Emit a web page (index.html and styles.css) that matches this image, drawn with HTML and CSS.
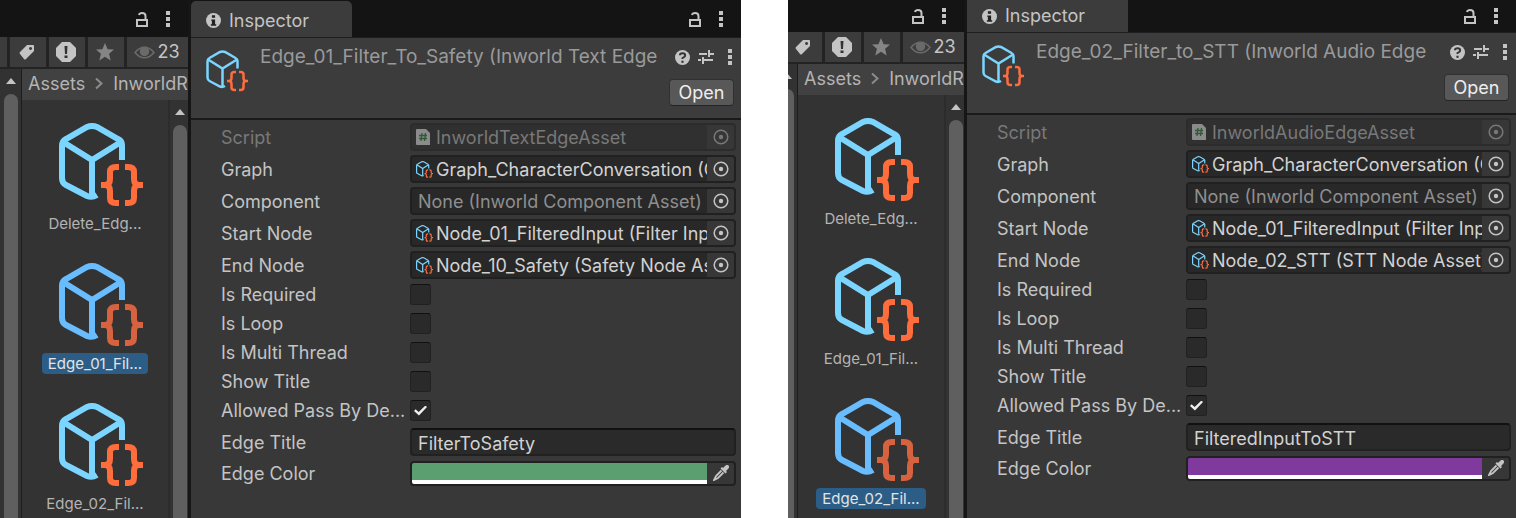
FILE: index.html
```
<!DOCTYPE html>
<html lang="en">
<head>
    <meta charset="UTF-8">
    <meta name="viewport" content="width=device-width, initial-scale=1.0">
    <title>Inspector</title>
    <link rel="stylesheet" href="styles.css">
</head>
<body>
    <!-- shared icons -->
    <svg class="sprite" aria-hidden="true">
        <symbol id="asset" viewBox="0 0 84 84">
            <g class="cube">
                <path d="M63 37V22Q63 18 59 16L38 4Q33 2 28 4L7 16Q3 18 3 23V55Q3 60 7 62L28 73Q33 75 38 72"/>
                <path d="M4 19L33 37L62 19M33 37V72"/>
            </g>
            <g class="braces">
                <path d="M60 44H57Q51 44 51 49V56Q51 62 46 62H42M46 62Q51 62 51 68V75Q51 80 57 80H60"/>
                <path d="M66 44H69Q75 44 75 49V56Q75 62 80 62H84M80 62Q75 62 75 68V75Q75 80 69 80H66"/>
            </g>
        </symbol>
        <symbol id="lock" viewBox="0 0 14 16">
            <path d="M2 9H12V15H2ZM10.500 9V5Q10.500 2 7 2Q4.500 2 4 4" fill="none" stroke="currentColor" stroke-width="2"/>
        </symbol>
        <symbol id="dots" viewBox="0 0 4 16">
            <path d="M0 0h4v4H0zM0 6h4v4H0zM0 12h4v4H0z" fill="currentColor"/>
        </symbol>
        <symbol id="tag" viewBox="0 0 16 16">
            <path fill-rule="evenodd" fill="currentColor" d="M8 1L14 1Q15 1 15 2V7L7 15Q6 16 5 15L1 10Q0 9 1 8ZM11.500 3a1.500 1.500 0 1 0 .1 0z"/>
        </symbol>
        <symbol id="alert" viewBox="0 0 20 20">
            <path d="M6 0h8l6 6v8l-6 6H6l-6-6V6z" fill="currentColor"/>
            <path d="M8.500 4h3l-.5 8h-2zM8.500 13.500h3v2.500h-3z" fill="#333"/>
        </symbol>
        <symbol id="star" viewBox="0 0 18 18">
            <path d="M9 0l2.600 6.200 6.400.4-4.900 4.200L14.700 17.500 9 13.800 3.300 17.500l1.600-6.700L0 6.600l6.400-.4z" fill="currentColor"/>
        </symbol>
        <symbol id="eye" viewBox="0 0 20 12">
            <path d="M1 6Q5 1 10 1T19 6Q15 11 10 11T1 6Z" fill="none" stroke="currentColor" stroke-width="1.500"/>
            <circle cx="10" cy="5" r="4.500" fill="currentColor"/>
        </symbol>
        <symbol id="arrow" viewBox="0 0 10 6">
            <path d="M0 6L5 0L10 6Z" fill="currentColor"/>
        </symbol>
        <symbol id="chevron" viewBox="0 0 8 12">
            <path d="M1 1L6.500 6L1 11" fill="none" stroke="currentColor" stroke-width="2"/>
        </symbol>
        <symbol id="info" viewBox="0 0 14 14">
            <circle cx="7" cy="7" r="7" fill="currentColor"/>
            <path d="M5.500 2h3v2.500h-3zM5 6h3.500v4.500h1V12H4.500v-1.500h1v-3H5z" fill="#222"/>
        </symbol>
        <symbol id="help" viewBox="0 0 14 14">
            <circle cx="7" cy="7" r="7" fill="currentColor"/>
            <path d="M4.500 5Q4.500 3 7 3T9.500 5Q9.500 6.500 7 7.500V8.500" fill="none" stroke="#333" stroke-width="1.800"/>
            <path d="M6 10h2v2H6z" fill="#333"/>
        </symbol>
        <symbol id="preset" viewBox="0 0 16 14">
            <path d="M1 4H9M11 4H16M11 0V7M0 10H3M5 10H15M5 7V14" fill="none" stroke="currentColor" stroke-width="2"/>
        </symbol>
        <symbol id="script" viewBox="0 0 14 16">
            <path d="M1 0H10L14 4V16H1Q0 16 0 15V1Q0 0 1 0Z" fill="#8b8b8b"/>
            <path d="M6 4L5 12M9.500 4L8.500 12M3 6.500H11M3 9.500H11" fill="none" stroke="#2f5a38" stroke-width="1.300"/>
        </symbol>
        <symbol id="target" viewBox="0 0 16 16">
            <circle cx="8" cy="8" r="6.800" fill="none" stroke="currentColor" stroke-width="1.500"/>
            <circle cx="8" cy="8" r="2.200" fill="currentColor"/>
        </symbol>
        <symbol id="dropper" viewBox="0 0 16 16">
            <path d="M10 3L12 1Q14 -1 15.500 .5T15 4L13 6L14 7L12.500 8.500L7.500 3.500L9 2Z" fill="currentColor"/>
            <path d="M8.500 5.500L3 11L1 15L5 13L10.500 7.500" fill="none" stroke="currentColor" stroke-width="1.800"/>
        </symbol>
    </svg>

    <main class="page">
        <section class="window">
            <div class="project">
                <div class="tabbar tools">
                    <button class="icon-btn" aria-label="Lock"><svg class="lock"><use href="#lock"/></svg></button>
                    <button class="icon-btn" aria-label="Menu"><svg class="dots"><use href="#dots"/></svg></button>
                </div>
                <div class="toolbar">
                    <button class="tool" aria-label="Search"></button>
                    <button class="tool" aria-label="Labels"><svg class="tag"><use href="#tag"/></svg></button>
                    <button class="tool" aria-label="Import log"><svg class="alert"><use href="#alert"/></svg></button>
                    <button class="tool dim" aria-label="Favorites"><svg class="star"><use href="#star"/></svg></button>
                    <button class="tool count"><svg class="eye"><use href="#eye"/></svg>23</button>
                </div>
                <div class="browser">
                    <div class="scrollbar tree-scroll"><svg class="arrow"><use href="#arrow"/></svg><div class="thumb"></div></div>
                    <div class="folder">
                        <nav class="crumbs"><a href="#">Assets</a><svg class="chevron"><use href="#chevron"/></svg><a href="#">InworldR</a></nav>
                        <div class="grid-area">
                            <ul class="assets">
                                <li class="asset"><svg><use href="#asset"/></svg><span>Delete_Edg...</span></li>
                                <li class="asset selected"><svg><use href="#asset"/></svg><span>Edge_01_Fil...</span></li>
                                <li class="asset"><svg><use href="#asset"/></svg><span>Edge_02_Fil...</span></li>
                            </ul>
                            <div class="scrollbar"><svg class="arrow"><use href="#arrow"/></svg><div class="thumb"></div></div>
                        </div>
                    </div>
                </div>
            </div>
            <div class="inspector">
                <div class="tabbar">
                    <div class="tab"><svg class="info"><use href="#info"/></svg>Inspector</div>
                    <div class="tools">
                        <button class="icon-btn" aria-label="Lock"><svg class="lock"><use href="#lock"/></svg></button>
                        <button class="icon-btn" aria-label="Menu"><svg class="dots"><use href="#dots"/></svg></button>
                    </div>
                </div>
                <header class="header">
                    <svg class="header-icon"><use href="#asset"/></svg>
                    <div class="header-main">
                        <div class="title-row">
                            <h2 class="title">Edge_01_Filter_To_Safety (Inworld Text Edge</h2>
                            <button class="icon-btn" aria-label="Help"><svg class="help"><use href="#help"/></svg></button>
                            <button class="icon-btn" aria-label="Presets"><svg class="preset"><use href="#preset"/></svg></button>
                            <button class="icon-btn" aria-label="More"><svg class="dots"><use href="#dots"/></svg></button>
                        </div>
                        <button class="open">Open</button>
                    </div>
                </header>
                <form class="fields">
                    <div class="row disabled">
                        <label for="a-script">Script</label>
                        <div class="object"><svg class="script"><use href="#script"/></svg><input id="a-script" value="InworldTextEdgeAsset" disabled><button type="button" class="pick" aria-label="Pick script" disabled><svg><use href="#target"/></svg></button></div>
                    </div>
                    <div class="row">
                        <label for="a-graph">Graph</label>
                        <div class="object"><svg class="mini"><use href="#asset"/></svg><input id="a-graph" value="Graph_CharacterConversation (Graph Asset)" readonly><button type="button" class="pick" aria-label="Pick graph"><svg><use href="#target"/></svg></button></div>
                    </div>
                    <div class="row">
                        <label for="a-component">Component</label>
                        <div class="object none"><input id="a-component" value="None (Inworld Component Asset)" readonly><button type="button" class="pick" aria-label="Pick component"><svg><use href="#target"/></svg></button></div>
                    </div>
                    <div class="row">
                        <label for="a-start">Start Node</label>
                        <div class="object"><svg class="mini"><use href="#asset"/></svg><input id="a-start" value="Node_01_FilteredInput (Filter Input Node Asset)" readonly><button type="button" class="pick" aria-label="Pick start node"><svg><use href="#target"/></svg></button></div>
                    </div>
                    <div class="row">
                        <label for="a-end">End Node</label>
                        <div class="object"><svg class="mini"><use href="#asset"/></svg><input id="a-end" value="Node_10_Safety (Safety Node Asset)" readonly><button type="button" class="pick" aria-label="Pick end node"><svg><use href="#target"/></svg></button></div>
                    </div>
                    <div class="row check"><label for="a-required">Is Required</label><input type="checkbox" id="a-required"></div>
                    <div class="row check"><label for="a-loop">Is Loop</label><input type="checkbox" id="a-loop"></div>
                    <div class="row check"><label for="a-multi">Is Multi Thread</label><input type="checkbox" id="a-multi"></div>
                    <div class="row check"><label for="a-show">Show Title</label><input type="checkbox" id="a-show"></div>
                    <div class="row check"><label for="a-allowed">Allowed Pass By De...</label><input type="checkbox" id="a-allowed" checked></div>
                    <div class="row">
                        <label for="a-title">Edge Title</label>
                        <input type="text" class="text" id="a-title" value="FilterToSafety">
                    </div>
                    <div class="row">
                        <label for="a-color">Edge Color</label>
                        <div class="color"><input type="color" id="a-color" value="#5b9f70"><button type="button" class="pick" aria-label="Pick color"><svg><use href="#dropper"/></svg></button></div>
                    </div>
                </form>
            </div>
        </section>

        <section class="window cropped">
            <div class="project">
                <div class="tabbar tools">
                    <button class="icon-btn" aria-label="Lock"><svg class="lock"><use href="#lock"/></svg></button>
                    <button class="icon-btn" aria-label="Menu"><svg class="dots"><use href="#dots"/></svg></button>
                </div>
                <div class="toolbar">
                    <button class="tool" aria-label="Search"></button>
                    <button class="tool" aria-label="Labels"><svg class="tag"><use href="#tag"/></svg></button>
                    <button class="tool" aria-label="Import log"><svg class="alert"><use href="#alert"/></svg></button>
                    <button class="tool dim" aria-label="Favorites"><svg class="star"><use href="#star"/></svg></button>
                    <button class="tool count"><svg class="eye"><use href="#eye"/></svg>23</button>
                </div>
                <div class="browser">
                    <div class="scrollbar tree-scroll"><svg class="arrow"><use href="#arrow"/></svg><div class="thumb"></div></div>
                    <div class="folder">
                        <nav class="crumbs"><a href="#">Assets</a><svg class="chevron"><use href="#chevron"/></svg><a href="#">InworldR</a></nav>
                        <div class="grid-area">
                            <ul class="assets">
                                <li class="asset"><svg><use href="#asset"/></svg><span>Delete_Edg...</span></li>
                                <li class="asset"><svg><use href="#asset"/></svg><span>Edge_01_Fil...</span></li>
                                <li class="asset selected"><svg><use href="#asset"/></svg><span>Edge_02_Fil...</span></li>
                            </ul>
                            <div class="scrollbar"><svg class="arrow"><use href="#arrow"/></svg><div class="thumb"></div></div>
                        </div>
                    </div>
                </div>
            </div>
            <div class="inspector">
                <div class="tabbar">
                    <div class="tab"><svg class="info"><use href="#info"/></svg>Inspector</div>
                    <div class="tools">
                        <button class="icon-btn" aria-label="Lock"><svg class="lock"><use href="#lock"/></svg></button>
                        <button class="icon-btn" aria-label="Menu"><svg class="dots"><use href="#dots"/></svg></button>
                    </div>
                </div>
                <header class="header">
                    <svg class="header-icon"><use href="#asset"/></svg>
                    <div class="header-main">
                        <div class="title-row">
                            <h2 class="title">Edge_02_Filter_to_STT (Inworld Audio Edge</h2>
                            <button class="icon-btn" aria-label="Help"><svg class="help"><use href="#help"/></svg></button>
                            <button class="icon-btn" aria-label="Presets"><svg class="preset"><use href="#preset"/></svg></button>
                            <button class="icon-btn" aria-label="More"><svg class="dots"><use href="#dots"/></svg></button>
                        </div>
                        <button class="open">Open</button>
                    </div>
                </header>
                <form class="fields">
                    <div class="row disabled">
                        <label for="b-script">Script</label>
                        <div class="object"><svg class="script"><use href="#script"/></svg><input id="b-script" value="InworldAudioEdgeAsset" disabled><button type="button" class="pick" aria-label="Pick script" disabled><svg><use href="#target"/></svg></button></div>
                    </div>
                    <div class="row">
                        <label for="b-graph">Graph</label>
                        <div class="object"><svg class="mini"><use href="#asset"/></svg><input id="b-graph" value="Graph_CharacterConversation (Graph Asset)" readonly><button type="button" class="pick" aria-label="Pick graph"><svg><use href="#target"/></svg></button></div>
                    </div>
                    <div class="row">
                        <label for="b-component">Component</label>
                        <div class="object none"><input id="b-component" value="None (Inworld Component Asset)" readonly><button type="button" class="pick" aria-label="Pick component"><svg><use href="#target"/></svg></button></div>
                    </div>
                    <div class="row">
                        <label for="b-start">Start Node</label>
                        <div class="object"><svg class="mini"><use href="#asset"/></svg><input id="b-start" value="Node_01_FilteredInput (Filter Input Node Asset)" readonly><button type="button" class="pick" aria-label="Pick start node"><svg><use href="#target"/></svg></button></div>
                    </div>
                    <div class="row">
                        <label for="b-end">End Node</label>
                        <div class="object"><svg class="mini"><use href="#asset"/></svg><input id="b-end" value="Node_02_STT (STT Node Asset)" readonly><button type="button" class="pick" aria-label="Pick end node"><svg><use href="#target"/></svg></button></div>
                    </div>
                    <div class="row check"><label for="b-required">Is Required</label><input type="checkbox" id="b-required"></div>
                    <div class="row check"><label for="b-loop">Is Loop</label><input type="checkbox" id="b-loop"></div>
                    <div class="row check"><label for="b-multi">Is Multi Thread</label><input type="checkbox" id="b-multi"></div>
                    <div class="row check"><label for="b-show">Show Title</label><input type="checkbox" id="b-show"></div>
                    <div class="row check"><label for="b-allowed">Allowed Pass By De...</label><input type="checkbox" id="b-allowed" checked></div>
                    <div class="row">
                        <label for="b-title">Edge Title</label>
                        <input type="text" class="text" id="b-title" value="FilteredInputToSTT">
                    </div>
                    <div class="row">
                        <label for="b-color">Edge Color</label>
                        <div class="color"><input type="color" id="b-color" value="#80399d"><button type="button" class="pick" aria-label="Pick color"><svg><use href="#dropper"/></svg></button></div>
                    </div>
                </form>
            </div>
        </section>
    </main>
</body>
</html>
```
FILE: styles.css
```
* {
    box-sizing: border-box;
}
body {
    margin: 0;
    background: #fff;
    color: #c4c4c4;
    font-family: Inter, "Liberation Sans", sans-serif;
    font-size: 18px;
    line-height: 24px;
}
button, input {
    font: inherit;
    color: inherit;
    margin: 0;
    padding: 0;
    border: none;
    background: none;
    border-radius: 0;
}
svg {
    display: block;
    flex: none;
}
a {
    color: inherit;
    text-decoration: none;
}
.sprite {
    position: absolute;
    width: 0;
    height: 0;
}
.page {
    display: grid;
    grid-template-columns: 741fr 728fr;
    gap: 47px;
    height: 100vh;
    overflow: hidden;
}
.window {
    display: flex;
    gap: 3px;
    min-width: 0;
    overflow: hidden;
    background: #161616;
}

/* top bars */
.tabbar {
    display: flex;
    justify-content: space-between;
    flex: none;
    height: 37px;
    background: #141414;
}
.cropped .tabbar {
    height: 32px;
}
.tools {
    display: flex;
    justify-content: flex-end;
    align-items: center;
    gap: 17px;
    padding-right: 18px;
}
.icon-btn {
    display: flex;
}
.lock {
    width: 14px;
    height: 16px;
}
.dots {
    width: 4px;
    height: 16px;
}
.tab {
    display: flex;
    align-items: center;
    gap: 8px;
    width: 161px;
    margin-top: 1px;
    padding: 3px 0 0 15px;
    border-radius: 5px 5px 0 0;
    background: #3c3c3c;
}
.cropped .tab {
    margin-top: 0;
    padding-top: 0;
    border-radius: 0;
}
.info, .help {
    width: 15px;
    height: 15px;
}

/* project browser */
.project {
    display: flex;
    flex-direction: column;
    align-items: flex-end;
    flex: 0 0 188px;
    overflow: hidden;
}
.cropped .project {
    flex-basis: 176px;
}
.project > * {
    width: 188px;
}
.toolbar {
    display: grid;
    grid-template-columns: 7px 36px 36px 36px 1fr;
    gap: 3px;
    flex: none;
    height: 32px;
    padding-bottom: 2px;
    background: #232323;
}
.tool {
    display: flex;
    align-items: center;
    justify-content: center;
    gap: 2px;
    padding-right: 3px;
    background: #3c3c3c;
}
.dim {
    color: #858585;
}
.count {
    padding-right: 1px;
}
.tag {
    width: 16px;
    height: 16px;
}
.alert {
    width: 20px;
    height: 20px;
}
.star {
    width: 18px;
    height: 18px;
}
.eye {
    width: 21px;
    height: 13px;
    color: #6a6a6a;
}
.browser {
    display: flex;
    flex: 1;
    min-height: 0;
}
.scrollbar {
    display: flex;
    flex-direction: column;
    align-items: center;
    gap: 10px;
    flex: 0 0 20px;
    padding: 9px 1px 0 2px;
    border-left: 2px solid #2c2c2c;
    background: #323232;
}
.tree-scroll {
    flex-basis: 22px;
    border-left: none;
    border-right: 1px solid #1c1c1c;
}
.arrow {
    width: 10px;
    height: 6px;
}
.thumb {
    flex: 1;
    width: 14px;
    border-radius: 7px 7px 0 0;
    background: #5f5f5f;
}
.folder {
    display: flex;
    flex-direction: column;
    flex: 1;
    min-width: 0;
    background: #333;
}
.crumbs {
    display: flex;
    align-items: center;
    gap: 10px;
    flex: none;
    height: 31px;
    padding: 0 0 2px 6px;
    white-space: nowrap;
    background: #414141;
    color: #b4b4b4;
}
.chevron {
    width: 8px;
    height: 13px;
    color: #8c8c8c;
}
.grid-area {
    display: flex;
    flex: 1;
    min-height: 0;
}
.assets {
    display: flex;
    flex-direction: column;
    gap: 29px;
    flex: 1;
    margin: 0;
    padding: 23px 0 0;
    list-style: none;
    overflow: hidden;
}
.asset {
    display: flex;
    flex-direction: column;
    align-items: center;
    gap: 6px;
    flex: none;
    font-size: 15px;
    line-height: 21px;
    color: #b4b4b4;
}
.asset svg {
    width: 84px;
    height: 84px;
    margin-left: 12px;
}
.asset span {
    padding: 0 6px;
    border-radius: 4px;
}
.selected span {
    background: #2c5d87;
    color: #e4e4e4;
}
.cube, .braces {
    fill: none;
    stroke-width: var(--line, 6);
}
.cube {
    stroke: var(--cube, #7bd5ff);
}
.braces {
    stroke: var(--braces, #ff6d3d);
}
.selected {
    --cube: #69bdff;
    --braces: #d66240;
}

/* inspector */
.inspector {
    display: flex;
    flex-direction: column;
    flex: 1;
    min-width: 0;
    background: #383838;
}
.header {
    display: flex;
    gap: 12px;
    flex: none;
    height: 83px;
    padding: 7px 7px 0 15px;
    border-top: 1px solid #1e1e1e;
    border-bottom: 2px solid #1a1a1a;
    background: #3c3c3c;
}
.header-icon {
    --line: 5;
    width: 42px;
    height: 42px;
    margin-top: 5px;
}
.header-main {
    display: flex;
    flex-direction: column;
    align-items: flex-end;
    gap: 10px;
    flex: 1;
    min-width: 0;
}
.title-row {
    display: flex;
    align-items: center;
    gap: 8px;
    width: 100%;
    padding-right: 2px;
}
.title {
    flex: 1;
    min-width: 0;
    margin: 0;
    overflow: hidden;
    white-space: nowrap;
    font-size: 19px;
    font-weight: 400;
    color: #9a9a9a;
}
.title-row .dots {
    margin-left: 6px;
}
.preset {
    width: 16px;
    height: 14px;
}
.open {
    width: 65px;
    height: 27px;
    border: 1px solid #303030;
    border-bottom-color: #242424;
    border-radius: 4px;
    background: #585858;
    color: #eee;
}
.fields {
    display: flex;
    flex-direction: column;
    gap: 4px;
    padding: 3px 5px 0 30px;
}
.row {
    display: grid;
    grid-template-columns: 189px 1fr;
    align-items: center;
}
.row label {
    padding-top: 2px;
}
.object, .color {
    display: flex;
    min-width: 0;
    border: 2px solid #202020;
    border-radius: 4px;
    background: #282828;
    overflow: hidden;
}
.object {
    align-items: center;
    height: 28px;
    padding-left: 4px;
    gap: 3px;
}
.object input {
    flex: 1;
    min-width: 0;
    height: 24px;
    padding-top: 2px;
    color: #d2d2d2;
}
.object input + .pick {
    margin-left: -3px;
}
.object.none {
    padding-left: 6px;
}
.none input {
    color: #8f8f8f;
}
.mini {
    width: 17px;
    height: 17px;
}
.script {
    width: 14px;
    height: 16px;
    margin-right: 3px;
}
.pick {
    display: flex;
    align-items: center;
    justify-content: center;
    flex: 0 0 27px;
    align-self: stretch;
    background: #373737;
}
.pick svg {
    width: 16px;
    height: 16px;
}
.disabled label, .disabled .object input, .disabled .pick {
    color: #787878;
}
.disabled .object {
    border-color: #2c2c2c;
    background: #303030;
}
.check {
    height: 25px;
    align-items: start;
}
.check label {
    padding-top: 0;
}
.check input {
    appearance: none;
    display: grid;
    place-items: center;
    width: 21px;
    height: 21px;
    margin-top: 1px;
    border: 1px solid #212121;
    border-top-color: #111;
    border-radius: 3px;
    background: #2a2a2a;
}
.check input:checked::before {
    content: "";
    width: 13px;
    height: 10px;
    background: #eee;
    clip-path: polygon(0 54%, 12% 38%, 36% 66%, 88% 0, 100% 14%, 38% 100%);
}
.text {
    width: 100%;
    height: 28px;
    padding: 2px 6px 0;
    border: 2px solid #212121;
    border-top-color: #111;
    border-radius: 4px;
    background: #2a2a2a;
    color: #d2d2d2;
}
.color {
    height: 25px;
}
.color input {
    appearance: none;
    flex: 1;
    min-width: 0;
    height: 21px;
    border-bottom: 4px solid #fff;
}
.color input::-webkit-color-swatch-wrapper {
    padding: 0;
}
.color input::-webkit-color-swatch {
    border: none;
    border-radius: 0;
}
```
